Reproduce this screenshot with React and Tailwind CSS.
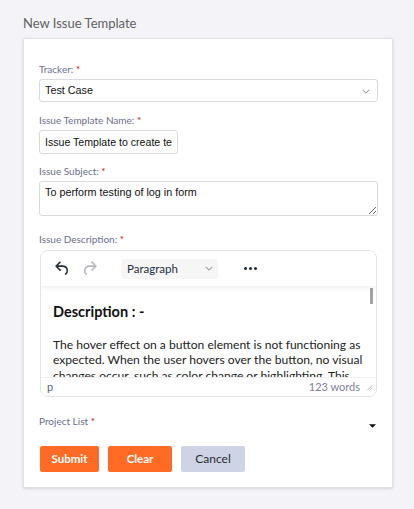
import React from "react";

const ui = "font-['Lato','Noto_Sans',sans-serif]";
const field = "font-['Liberation_Sans',Arial,sans-serif]";

function Label({ children, className = "" }) {
  return (
    <div className={`${ui} text-[10px] leading-[12px] text-[#6a6f92] ${className}`}>
      {children} <span className="text-[#d10000]">*</span>
    </div>
  );
}

function Chevron({ className = "" }) {
  return (
    <svg viewBox="0 0 10 6" className={className} fill="none" stroke="currentColor" strokeWidth="1.3">
      <path d="M1 1l4 4 4-4" />
    </svg>
  );
}

function UndoIcon({ className = "" }) {
  return (
    <svg viewBox="0 0 24 24" className={className} fill="currentColor">
      <path d="M6.4 8H12c3.7 0 6.2 2 6.8 5.1.6 2.7-.4 5.6-2.3 6.8a1 1 0 0 1-1-1.8c1.1-.7 1.8-2.7 1.4-4.6-.5-2.2-2.2-3.5-4.9-3.5H6.4l3.3 3.3a1 1 0 1 1-1.4 1.4l-5-5a1 1 0 0 1 0-1.4l5-5a1 1 0 0 1 1.4 1.4L6.4 8Z" />
    </svg>
  );
}

function RedoIcon({ className = "" }) {
  return (
    <svg viewBox="0 0 24 24" className={className} fill="currentColor">
      <path d="M17.6 10H12c-2.8 0-4.4 1.4-4.9 3.5-.4 2 .3 3.9 1.4 4.6a1 1 0 1 1-1 1.8c-2-1.2-2.9-4.1-2.3-6.8.6-3 3-5.1 6.8-5.1h5.6l-3.3-3.3a1 1 0 1 1 1.4-1.4l5 5a1 1 0 0 1 0 1.4l-5 5a1 1 0 0 1-1.4-1.4l3.3-3.3Z" />
    </svg>
  );
}

const bodyLines = [
  "The hover effect on a button element is not functioning as",
  "expected. When the user hovers over the button, no visual",
  "changes occur, such as color change or highlighting. This",
  "issue affects the user experience on the log in form.",
];

function Editor() {
  return (
    <div className="mx-px h-[147px] rounded-[8px] border border-[#e3e3e3] bg-white flex flex-col overflow-hidden">
      {/* toolbar */}
      <div className="relative z-10 h-[35px] shrink-0 flex items-center shadow-[0_2px_5px_rgba(0,0,0,0.07)] bg-white">
        <button className="ml-[8px] w-[26px] h-[26px] flex items-center justify-center text-[#222f3e]">
          <UndoIcon className="w-[19px] h-[19px]" />
        </button>
        <button className="ml-px w-[26px] h-[26px] flex items-center justify-center text-[#b7b9bf]">
          <RedoIcon className="w-[19px] h-[19px]" />
        </button>
        <div className="ml-[19px] w-[97px] h-[20px] rounded-[3px] bg-[#f6f6f6] flex items-center justify-between pl-[6px] pr-[5px]">
          <span className={`${ui} text-[11.5px] text-[#222f3e]`}>Paragraph</span>
          <Chevron className="w-[8px] h-[5px] text-[#9a9ca3]" />
        </div>
        <div className="ml-[18px] w-[28px] flex items-center justify-center gap-[2px]">
          <span className="w-[3px] h-[3px] rounded-full bg-[#222f3e]" />
          <span className="w-[3px] h-[3px] rounded-full bg-[#222f3e]" />
          <span className="w-[3px] h-[3px] rounded-full bg-[#222f3e]" />
        </div>
      </div>
      {/* content */}
      <div className="relative flex-1 overflow-hidden pl-[12px] pr-[14px]">
        <div className="absolute right-[3px] top-[2px] w-[3px] h-[16px] bg-[#a3a3a3]" />
        <h3 className={`${ui} mt-[17px] text-[14.5px] leading-[18px] font-bold text-[#111]`}>Description : -</h3>
        <div className={`${ui} mt-[15.5px] text-[12.1px] leading-[15.5px] text-[#222]`}>
          {bodyLines.map((line) => (
            <div key={line} className="whitespace-nowrap">{line}</div>
          ))}
        </div>
      </div>
      {/* status bar */}
      <div className="h-[19px] shrink-0 border-t border-[#eeeeee] flex items-center pl-[6px] pr-[3px] bg-white">
        <span className={`${ui} text-[11px] text-[#59607a]`}>p</span>
        <span className={`${ui} ml-auto text-[11px] text-[#7b80a6]`}>123 words</span>
        <svg viewBox="0 0 10 10" className="ml-[5px] w-[8px] h-[8px] text-[#a0a0a0]" fill="none" stroke="currentColor" strokeWidth="1">
          <path d="M9 3L3 9M9 6L6 9" />
        </svg>
      </div>
    </div>
  );
}

export default function App() {
  return (
    <div className="min-h-screen w-full bg-[#f4f4f8] pt-[15px] pl-[23px]">
      <h1 className={`${ui} text-[13px] leading-[16px] text-[#616161] mb-[7px]`}>New Issue Template</h1>
      <div className="w-[370px] bg-white border border-[#e2e2e2] rounded-[2px] shadow-[0_1px_3px_rgba(0,0,0,0.12)] pt-[24px] pl-[15px] pr-[14px] pb-[15px]">
        <Label className="mb-[4px]">Tracker:</Label>
        <div className="relative h-[23px] rounded-[3px] border border-[#dadada] bg-white flex items-center pl-[5px]">
          <span className={`${field} text-[10.8px] text-[#111]`}>Test Case</span>
          <Chevron className="absolute right-[7px] top-[9px] w-[8px] h-[5px] text-[#a0a0a0]" />
        </div>

        <Label className="mt-[12px] mb-[4px]">Issue Template Name:</Label>
        <input
          readOnly
          value="Issue Template to create test cases"
          className={`${field} block w-[139px] h-[24px] rounded-[3px] border border-[#dadada] px-[5px] text-[10.6px] text-[#111] outline-none`}
        />

        <Label className="mt-[11px] mb-[4px]">Issue Subject:</Label>
        <textarea
          readOnly
          value="To perform testing of log in form"
          className={`${field} block w-full h-[35px] rounded-[3px] border border-[#dadada] px-[5px] pt-[4px] text-[10.8px] leading-[13px] text-[#111] outline-none resize-y`}
        />

        <Label className="mt-[17px] mb-[5px]">Issue Description:</Label>
        <Editor />

        <div className="mt-[18px] h-[22px] flex items-start justify-between">
          <Label>Project List</Label>
          <svg viewBox="0 0 8 4" className="mt-[9px] mr-[2px] w-[7px] h-[4px]" fill="#111">
            <path d="M0 0h8L4 4Z" />
          </svg>
        </div>

        <div className="mt-[9px] flex gap-[9px] pl-px">
          <button className={`${ui} w-[59px] h-[26px] rounded-[2px] bg-[#ff6a24] text-white text-[11.5px] font-bold`}>Submit</button>
          <button className={`${ui} w-[64px] h-[26px] rounded-[2px] bg-[#ff6a24] text-white text-[11.5px] font-bold`}>Clear</button>
          <button className={`${ui} w-[64px] h-[26px] rounded-[2px] bg-[#cfd3e6] text-[#2b2b2b] text-[12px]`}>Cancel</button>
        </div>
      </div>
    </div>
  );
}
